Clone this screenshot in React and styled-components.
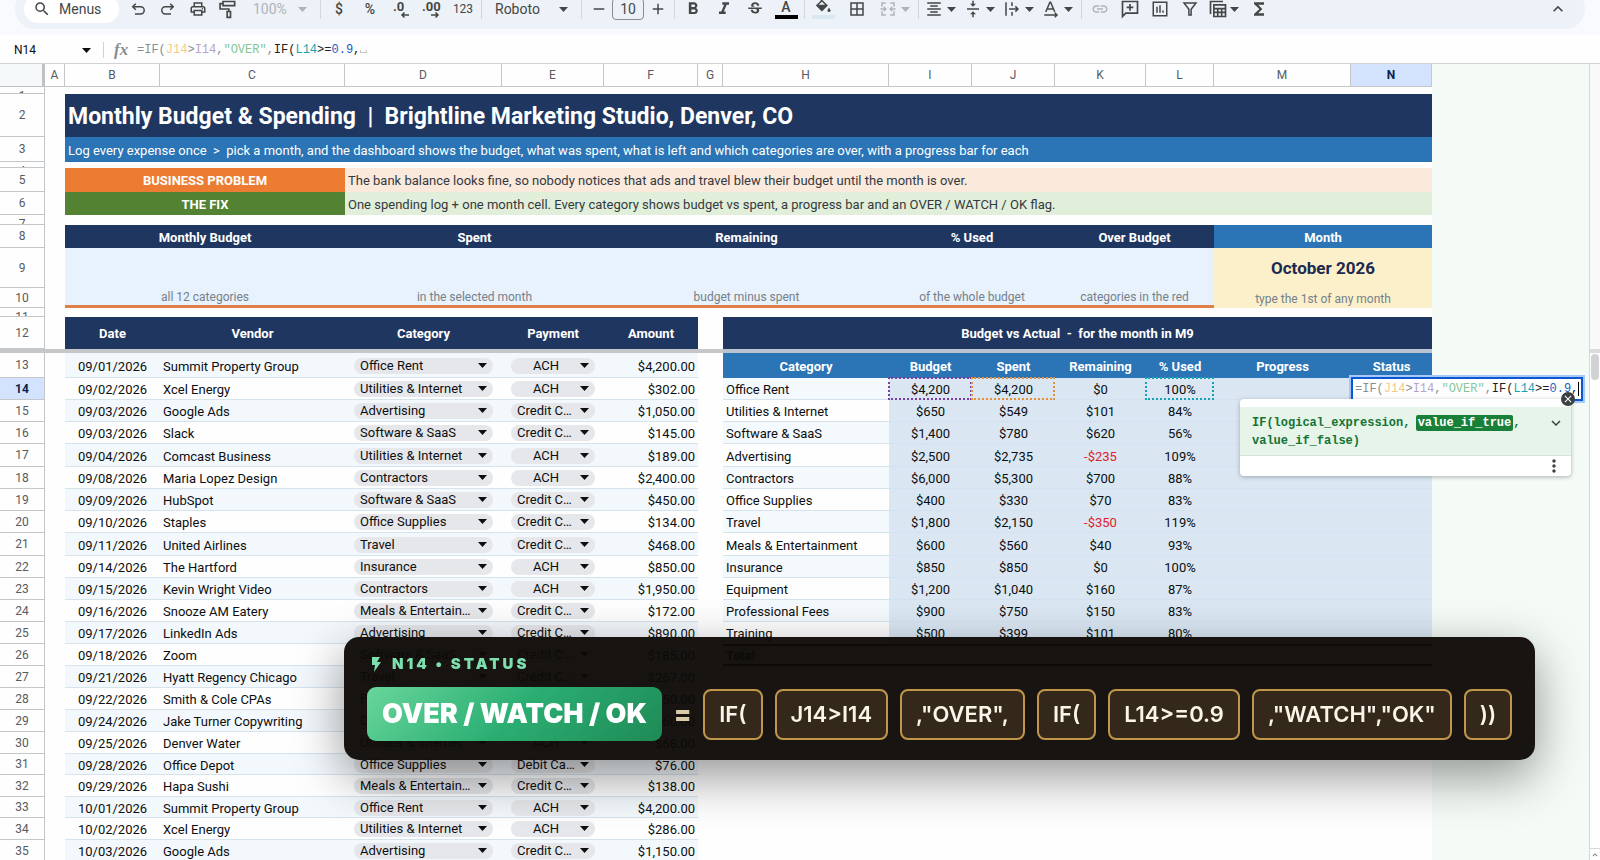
import React, { useState } from 'react';
import styled, { createGlobalStyle, css } from 'styled-components';
import {
  MdAdd,
  MdBorderAll,
  MdClose,
  MdFormatAlignCenter,
  MdFormatBold,
  MdFormatItalic,
  MdFunctions,
  MdKeyboardArrowDown,
  MdKeyboardArrowUp,
  MdLink,
  MdMoreVert,
  MdOutlinePrint,
  MdRemove,
  MdSearch,
  MdStrikethroughS,
  MdVerticalAlignCenter,
} from 'react-icons/md';

const COLUMNS = [
  ['A', 20], ['B', 95], ['C', 185], ['D', 157], ['E', 102], ['F', 94], ['G', 25],
  ['H', 166], ['I', 83], ['J', 83], ['K', 91], ['L', 68], ['M', 137], ['N', 81],
];

const CATEGORIES = [
  'Office Rent', 'Utilities & Internet', 'Software & SaaS', 'Advertising', 'Contractors',
  'Office Supplies', 'Travel', 'Meals & Entertainment', 'Insurance', 'Equipment',
  'Professional Fees', 'Training',
];

const PAYMENTS = ['ACH', 'Credit Card', 'Debit Card'];

// row height, date, vendor, category, payment, amount
const EXPENSES = [
  [25, '09/01/2026', 'Summit Property Group', 'Office Rent', 'ACH', '$4,200.00'],
  [22, '09/02/2026', 'Xcel Energy', 'Utilities & Internet', 'ACH', '$302.00'],
  [22, '09/03/2026', 'Google Ads', 'Advertising', 'Credit Card', '$1,050.00'],
  [22, '09/03/2026', 'Slack', 'Software & SaaS', 'Credit Card', '$145.00'],
  [23, '09/04/2026', 'Comcast Business', 'Utilities & Internet', 'ACH', '$189.00'],
  [22, '09/08/2026', 'Maria Lopez Design', 'Contractors', 'ACH', '$2,400.00'],
  [22, '09/09/2026', 'HubSpot', 'Software & SaaS', 'Credit Card', '$450.00'],
  [22, '09/10/2026', 'Staples', 'Office Supplies', 'Credit Card', '$134.00'],
  [23, '09/11/2026', 'United Airlines', 'Travel', 'Credit Card', '$468.00'],
  [22, '09/14/2026', 'The Hartford', 'Insurance', 'ACH', '$850.00'],
  [22, '09/15/2026', 'Kevin Wright Video', 'Contractors', 'ACH', '$1,950.00'],
  [22, '09/16/2026', 'Snooze AM Eatery', 'Meals & Entertainment', 'Credit Card', '$172.00'],
  [22, '09/17/2026', 'LinkedIn Ads', 'Advertising', 'Credit Card', '$890.00'],
  [22, '09/18/2026', 'Zoom', 'Software & SaaS', 'Credit Card', '$185.00'],
  [22, '09/21/2026', 'Hyatt Regency Chicago', 'Travel', 'Credit Card', '$267.00'],
  [22, '09/22/2026', 'Smith & Cole CPAs', 'Professional Fees', 'ACH', '$750.00'],
  [22, '09/24/2026', 'Jake Turner Copywriting', 'Contractors', 'ACH', '$960.00'],
  [22, '09/25/2026', 'Denver Water', 'Utilities & Internet', 'ACH', '$68.00'],
  [21, '09/28/2026', 'Office Depot', 'Office Supplies', 'Debit Card', '$76.00'],
  [22, '09/29/2026', 'Hapa Sushi', 'Meals & Entertainment', 'Credit Card', '$138.00'],
  [21, '10/01/2026', 'Summit Property Group', 'Office Rent', 'ACH', '$4,200.00'],
  [22, '10/02/2026', 'Xcel Energy', 'Utilities & Internet', 'ACH', '$286.00'],
  [22, '10/03/2026', 'Google Ads', 'Advertising', 'Credit Card', '$1,150.00'],
];

const BUDGET = [
  ['Office Rent', '$4,200', '$4,200', '$0', '100%'],
  ['Utilities & Internet', '$650', '$549', '$101', '84%'],
  ['Software & SaaS', '$1,400', '$780', '$620', '56%'],
  ['Advertising', '$2,500', '$2,735', '-$235', '109%'],
  ['Contractors', '$6,000', '$5,300', '$700', '88%'],
  ['Office Supplies', '$400', '$330', '$70', '83%'],
  ['Travel', '$1,800', '$2,150', '-$350', '119%'],
  ['Meals & Entertainment', '$600', '$560', '$40', '93%'],
  ['Insurance', '$850', '$850', '$0', '100%'],
  ['Equipment', '$1,200', '$1,040', '$160', '87%'],
  ['Professional Fees', '$900', '$750', '$150', '83%'],
  ['Training', '$500', '$399', '$101', '80%'],
];

const KPIS = [
  ['Monthly Budget', 'all 12 categories', 2],
  ['Spent', 'in the selected month', 2],
  ['Remaining', 'budget minus spent', 3],
  ['% Used', 'of the whole budget', 2],
  ['Over Budget', 'categories in the red', 2],
];

const TOKENS = ['IF(', 'J14>I14', ',"OVER",', 'IF(', 'L14>=0.9', ',"WATCH","OK"', '))'];

const Glyph = ({ children, size = 18 }) => (
  <svg width={size} height={size} viewBox="0 0 24 24" fill="none" stroke="currentColor" strokeWidth="2" aria-hidden="true">
    {children}
  </svg>
);

const UndoIcon = () => (
  <Glyph><path d="M9 5 5 9l4 4M5 9h10.500a4.800 4.800 0 0 1 0 9.600H8" /></Glyph>
);

const RedoIcon = () => (
  <Glyph><path d="m15 5 4 4-4 4M19 9H8.500a4.800 4.800 0 0 0 0 9.600H16" /></Glyph>
);

const RollerIcon = () => (
  <Glyph size={20}><path d="M6 3h14v5H6zM6 5.500H2.500V12h10.500v3M11 15h4v7h-4z" /></Glyph>
);

const DecimalIcon = ({ more }) => (
  <svg width="20" height="20" viewBox="0 0 20 20" aria-hidden="true">
    <text x={more ? 0 : 2} y="12" fontFamily="Roboto, sans-serif" fontSize="13" fontWeight="700" fill="currentColor">
      {more ? '.00' : '.0'}
    </text>
    <path
      d={more ? 'M9 16h7M13.500 13.500 16 16l-2.500 2.500' : 'M18 16h-7M13.500 13.500 11 16l2.500 2.500'}
      fill="none"
      stroke="currentColor"
      strokeWidth="1.500"
    />
  </svg>
);

const FillIcon = () => (
  <Glyph>
    <path d="m8 1 9 9-6.500 6.500L4 10l6-6" />
    <path d="M5 10h11l-5.500 6z" fill="currentColor" />
    <path d="M20 13s-2 2.200-2 3.500a2 2 0 0 0 4 0c0-1.300-2-3.500-2-3.500z" fill="currentColor" stroke="none" />
  </Glyph>
);

const MergeIcon = () => (
  <Glyph><path d="M9 4H4v5M15 4h5v5M9 20H4v-5M15 20h5v-5M2 12h7M6.500 9.500 9 12l-2.500 2.500M22 12h-7M17.500 9.500 15 12l2.500 2.500" /></Glyph>
);

const OverflowIcon = () => (
  <Glyph><path d="M4 3v18M12 3v5M12 16v5M8 12h12M16.500 8.500 20 12l-3.500 3.500" /></Glyph>
);

const RotateIcon = () => (
  <Glyph><path d="M5 16 10.500 3h1L17 16M7 12h8M3 20h17M17 17l3 3-3 3" /></Glyph>
);

const CommentIcon = () => (
  <Glyph size={20}><path d="M3 21V3h18v14H7zM12 6v8M8 10h8" /></Glyph>
);

const ChartIcon = () => (
  <Glyph><path d="M3 3h18v18H3zM8 9v8M12 7v10M16 14v3" /></Glyph>
);

const FilterIcon = () => (
  <Glyph><path d="M4 4h16l-6.500 8.500V20h-3v-7.500z" /></Glyph>
);

const TableViewIcon = () => (
  <Glyph size={20}><path d="M18 3H3v15M7 7h14v14H7zM7 11.500h14M7 16h14M11.700 11.500V21M16.400 11.500V21" /></Glyph>
);

const BoltIcon = () => (
  <svg width="18" height="18" viewBox="0 0 18 18" aria-hidden="true">
    <path d="M5 2h8l-3 5h4L7 17l1-7H5z" fill="currentColor" />
  </svg>
);

const Caret = () => (
  <svg width="9" height="5" viewBox="0 0 9 5" aria-hidden="true">
    <path d="M0 0h9L4.500 5z" fill="currentColor" />
  </svg>
);

const Formula = () => (
  <>
    <Tok $c="#8a8d91">=IF(</Tok>
    <Tok $c="#f3c98b">J14</Tok>
    <Tok $c="#8a8d91">&gt;</Tok>
    <Tok $c="#b9a3c9">I14</Tok>
    <Tok $c="#8a8d91">,</Tok>
    <Tok $c="#86c796">"OVER"</Tok>
    <Tok $c="#8a8d91">,</Tok>
    <Tok $c="#202124">IF(</Tok>
    <Tok $c="#12a4b4">L14</Tok>
    <Tok $c="#202124">&gt;=</Tok>
    <Tok $c="#1a5fc4">0.9</Tok>
    <Tok $c="#202124">,</Tok>
  </>
);

const Chip = ({ label, value, options, centered }) => {
  const [current, setCurrent] = useState(value);

  return (
    <ChipBox>
      <ChipSelect
        aria-label={label}
        value={current}
        $centered={centered}
        onChange={(e) => setCurrent(e.target.value)}
      >
        {options.map((option) => (
          <option key={option}>{option}</option>
        ))}
      </ChipSelect>
      <Caret />
    </ChipBox>
  );
};

const Toolbar = () => (
  <ToolbarBar>
    <MenusButton><MdSearch size={18} />Menus</MenusButton>
    <Group>
      <ToolButton aria-label="Undo"><UndoIcon /></ToolButton>
      <ToolButton aria-label="Redo"><RedoIcon /></ToolButton>
      <ToolButton aria-label="Print"><MdOutlinePrint size={18} /></ToolButton>
      <ToolButton aria-label="Paint format"><RollerIcon /></ToolButton>
    </Group>
    <ToolSelect $width={74} $muted>
      <select aria-label="Zoom" defaultValue="100%">
        <option>100%</option>
      </select>
      <Caret />
    </ToolSelect>
    <Divider />
    <Group $gap={1}>
      <ToolButton aria-label="Currency">$</ToolButton>
      <ToolButton aria-label="Percent">%</ToolButton>
      <ToolButton aria-label="Decrease decimals"><DecimalIcon /></ToolButton>
      <ToolButton aria-label="Increase decimals"><DecimalIcon more /></ToolButton>
      <ToolButton $small>123</ToolButton>
    </Group>
    <Divider />
    <ToolSelect $width={93}>
      <select aria-label="Font" defaultValue="Roboto">
        <option>Roboto</option>
      </select>
      <Caret />
    </ToolSelect>
    <Divider />
    <Group>
      <ToolButton $narrow aria-label="Decrease font size"><MdRemove size={18} /></ToolButton>
      <SizeInput aria-label="Font size" defaultValue="10" />
      <ToolButton $narrow aria-label="Increase font size"><MdAdd size={18} /></ToolButton>
    </Group>
    <Divider />
    <Group $gap={1}>
      <ToolButton aria-label="Bold"><MdFormatBold size={20} /></ToolButton>
      <ToolButton aria-label="Italic"><MdFormatItalic size={20} /></ToolButton>
      <ToolButton aria-label="Strikethrough"><MdStrikethroughS size={18} /></ToolButton>
      <ToolButton aria-label="Text color"><Swatch $color="#000">A</Swatch></ToolButton>
    </Group>
    <Divider />
    <Group $gap={4}>
      <ToolButton aria-label="Fill color"><Swatch $color="#dae8f3"><FillIcon /></Swatch></ToolButton>
      <ToolButton aria-label="Borders"><MdBorderAll size={18} /></ToolButton>
      <SplitButton $muted aria-label="Merge cells"><MergeIcon /><Caret /></SplitButton>
    </Group>
    <Divider />
    <Group>
      <SplitButton aria-label="Horizontal align"><MdFormatAlignCenter size={18} /><Caret /></SplitButton>
      <SplitButton aria-label="Vertical align"><MdVerticalAlignCenter size={18} /><Caret /></SplitButton>
      <SplitButton aria-label="Text wrapping"><OverflowIcon /><Caret /></SplitButton>
      <SplitButton aria-label="Text rotation"><RotateIcon /><Caret /></SplitButton>
    </Group>
    <Divider />
    <Group>
      <ToolButton $muted aria-label="Insert link"><MdLink size={18} /></ToolButton>
      <ToolButton aria-label="Insert comment"><CommentIcon /></ToolButton>
      <ToolButton aria-label="Insert chart"><ChartIcon /></ToolButton>
      <ToolButton aria-label="Create a filter"><FilterIcon /></ToolButton>
      <SplitButton aria-label="Table views"><TableViewIcon /><Caret /></SplitButton>
      <ToolButton aria-label="Functions"><MdFunctions size={20} /></ToolButton>
    </Group>
    <CollapseButton aria-label="Hide the menus"><MdKeyboardArrowUp size={20} /></CollapseButton>
  </ToolbarBar>
);

const FormulaHint = () => (
  <HintCard>
    <HintSignature>
      <code>
        IF(logical_expression, <mark>value_if_true</mark>,
        <br />
        value_if_false)
      </code>
      <HintButton aria-label="Expand"><MdKeyboardArrowDown size={18} /></HintButton>
    </HintSignature>
    <HintFooter>
      <HintButton aria-label="More options"><MdMoreVert size={20} /></HintButton>
    </HintFooter>
  </HintCard>
);

const CellEditor = () => (
  <Editor role="textbox" aria-label="Cell N14">
    <Formula />
    <TextCursor />
    <CloseHint aria-label="Close help"><MdClose size={12} /></CloseHint>
    <FormulaHint />
  </Editor>
);

const SheetRow = ({ n, height, selected, children }) => (
  <tr>
    <RowHead scope="row" $selected={selected}>
      <RowLabel $height={height}>{n}</RowLabel>
    </RowHead>
    <td />
    {children}
  </tr>
);

const BudgetCells = ({ index }) => {
  if (index === 0) {
    return (
      <>
        {['Category', 'Budget', 'Spent', 'Remaining', '% Used', 'Progress', 'Status'].map((name) => (
          <Cell key={name} as="th" $bg="#2b74b5" $color="#fff" $bold>{name}</Cell>
        ))}
      </>
    );
  }
  if (index === BUDGET.length + 1) {
    return (
      <>
        <TotalCell $align="left" $bold>Total</TotalCell>
        <TotalCell colSpan={6} />
      </>
    );
  }
  const row = BUDGET[index - 1];
  if (!row) return <td colSpan={7} />;

  const [name, budget, spent, remaining, used] = row;
  const first = index === 1;
  return (
    <>
      <Cell $align="left" $bg={index % 2 ? '#f4f9fd' : '#fefefe'} $line="#d5e3ed">{name}</Cell>
      <Cell $bg="#dae7f3" $line="#d4e2ef" $ref={first && '#7b3fa0'}>{budget}</Cell>
      <Cell $bg="#dae7f3" $line="#d4e2ef" $ref={first && '#e69138'}>{spent}</Cell>
      <Cell $bg="#dae7f3" $line="#d4e2ef" $color={remaining.startsWith('-') ? '#e0202b' : undefined}>{remaining}</Cell>
      <Cell $bg="#dae7f3" $line="#d4e2ef" $ref={first && '#12a4b4'}>{used}</Cell>
      <Cell $bg="#dae7f3" $line="#d4e2ef" />
      <Cell $bg="#dae7f3" $line="#d4e2ef">{first && <CellEditor />}</Cell>
    </>
  );
};

const Sheet = () => (
  <Table>
    <colgroup>
      <col style={{ width: 45 }} />
      {COLUMNS.map(([name, width]) => (
        <col key={name} style={{ width }} />
      ))}
    </colgroup>
    <thead>
      <tr>
        <Corner />
        {COLUMNS.map(([name]) => (
          <ColHead key={name} scope="col" $selected={name === 'N'}>{name}</ColHead>
        ))}
      </tr>
    </thead>
    <tbody>
      <SheetRow n={1} height={7} />
      <SheetRow n={2} height={43}>
        <Cell colSpan={13} $align="left" $bg="#1f3661" $color="#fff" $bold $size={23}>
          {'Monthly Budget & Spending  |  Brightline Marketing Studio, Denver, CO'}
        </Cell>
      </SheetRow>
      <SheetRow n={3} height={25}>
        <Cell colSpan={13} $align="left" $bg="#2b74b5" $color="#fff">
          {'Log every expense once  >  pick a month, and the dashboard shows the budget, what was spent, what is left and which categories are over, with a progress bar for each'}
        </Cell>
      </SheetRow>
      <SheetRow n={4} height={6} />
      <SheetRow n={5} height={24}>
        <Cell colSpan={2} $bg="#eb7c31" $color="#fff" $bold>BUSINESS PROBLEM</Cell>
        <Cell colSpan={11} $align="left" $bg="#fbe9dc" $color="#333a40">
          The bank balance looks fine, so nobody notices that ads and travel blew their budget until the month is over.
        </Cell>
      </SheetRow>
      <SheetRow n={6} height={23}>
        <Cell colSpan={2} $bg="#538233" $color="#fff" $bold>THE FIX</Cell>
        <Cell colSpan={11} $align="left" $bg="#e1eed9" $color="#333a40">
          One spending log + one month cell. Every category shows budget vs spent, a progress bar and an OVER / WATCH / OK flag.
        </Cell>
      </SheetRow>
      <SheetRow n={7} height={10} />
      <SheetRow n={8} height={23}>
        {KPIS.map(([name, , span]) => (
          <Cell key={name} colSpan={span} $bg="#1f3661" $color="#fff" $bold>{name}</Cell>
        ))}
        <Cell colSpan={2} $bg="#2b74b5" $color="#fff" $bold>Month</Cell>
      </SheetRow>
      <SheetRow n={9} height={40}>
        <Cell colSpan={11} $bg="#e8f2fc" />
        <Cell colSpan={2} $bg="#fcf0cb" $color="#1b2a4e" $bold $size={17}>October 2026</Cell>
      </SheetRow>
      <SheetRow n={10} height={20}>
        {KPIS.map(([name, note, span]) => (
          <Cell key={name} colSpan={span} $bg="#e8f2fc" $color="#75808a" $size={12} $accent>{note}</Cell>
        ))}
        <Cell colSpan={2} $bg="#fcf0cb" $color="#75808a" $size={12}>type the 1st of any month</Cell>
      </SheetRow>
      <SheetRow n={11} height={9} />
      <SheetRow n={12} height={32}>
        {['Date', 'Vendor', 'Category', 'Payment', 'Amount'].map((name) => (
          <Cell key={name} as="th" $bg="#1f3661" $color="#fff" $bold>{name}</Cell>
        ))}
        <td />
        <Cell colSpan={7} $bg="#1f3661" $color="#fff" $bold>{'Budget vs Actual  -  for the month in M9'}</Cell>
      </SheetRow>
      <tr>
        <FreezeLine colSpan={8} />
        <FreezeLine colSpan={7} $blue />
      </tr>
      {EXPENSES.map(([height, date, vendor, category, payment, amount], i) => {
        const bg = i % 2 ? '#fefefe' : '#f3f8fc';
        return (
          <SheetRow key={i} n={i + 13} height={height} selected={i === 1}>
            <Cell $bg={bg} $line="#d5e3ed">{date}</Cell>
            <Cell $bg={bg} $line="#d5e3ed" $align="left">{vendor}</Cell>
            <Cell $bg={bg} $line="#d5e3ed" $chip>
              <Chip label={`Category, row ${i + 13}`} value={category} options={CATEGORIES} />
            </Cell>
            <Cell $bg={bg} $line="#d5e3ed" $chip>
              <Chip label={`Payment, row ${i + 13}`} value={payment} options={PAYMENTS} centered />
            </Cell>
            <Cell $bg={bg} $line="#d5e3ed" $align="right">{amount}</Cell>
            <td />
            <BudgetCells index={i} />
          </SheetRow>
        );
      })}
    </tbody>
  </Table>
);

const FormulaCard = () => (
  <Card>
    <CardTitle><BoltIcon />N14 • STATUS</CardTitle>
    <CardRow>
      <ResultPill>OVER / WATCH / OK</ResultPill>
      <EqualSign>=</EqualSign>
      {TOKENS.map((token, i) => (
        <FormulaToken key={i}>{token}</FormulaToken>
      ))}
    </CardRow>
  </Card>
);

const App = () => (
  <Page>
    <GlobalStyle />
    <ToolbarArea>
      <Toolbar />
    </ToolbarArea>
    <FormulaBar>
      <NameBox>
        <input aria-label="Name box" defaultValue="N14" />
        <Caret />
      </NameBox>
      <Fx>fx</Fx>
      <FormulaText role="textbox" aria-label="Formula"><Formula /><SpaceMark /></FormulaText>
    </FormulaBar>
    <SheetArea>
      <Sheet />
      <EmptyArea />
      <ScrollTrack>
        <ScrollTop />
        <ScrollThumb />
        <ScrollUp aria-label="Scroll up"><MdKeyboardArrowUp size={10} /></ScrollUp>
      </ScrollTrack>
    </SheetArea>
    <FormulaCard />
  </Page>
);

const mono = css`
  font-family: "Liberation Mono", monospace;
  font-size: 12px;
`;

const GlobalStyle = createGlobalStyle`
  * {
    box-sizing: border-box;
  }
  body {
    margin: 0;
    overflow: hidden;
    font-family: Roboto, sans-serif;
    font-size: 14px;
    color: #0c0e10;
  }
  button, input, select {
    margin: 0;
    padding: 0;
    border: 0;
    outline: 0;
    background: none;
    font: inherit;
    color: inherit;
  }
  select {
    appearance: none;
  }
  svg {
    flex: none;
  }
`;

const Page = styled.div`
  display: flex;
  flex-direction: column;
  height: 100vh;
  overflow: hidden;
  background: #fefefe;
`;

const ToolbarArea = styled.div`
  flex: none;
  height: 35px;
  padding: 0 15px;
  background: #f8fafd;
`;

const ToolbarBar = styled.div`
  display: flex;
  align-items: center;
  height: 40px;
  margin-top: -11px;
  padding: 0 12px 0 9px;
  border-radius: 20px;
  background: #edf2f8;
  color: #444746;
`;

const MenusButton = styled.button`
  display: flex;
  align-items: center;
  gap: 8px;
  width: 95px;
  height: 28px;
  margin-right: 4px;
  padding-left: 9px;
  border-radius: 14px;
  background: #fff;
`;

const Group = styled.div`
  display: flex;
  align-items: center;
  gap: ${({ $gap }) => $gap || 0}px;
`;

const ToolButton = styled.button`
  display: flex;
  align-items: center;
  justify-content: center;
  width: ${({ $narrow }) => ($narrow ? 27 : 30)}px;
  height: 28px;
  font-size: ${({ $small }) => ($small ? 12 : 14)}px;
  font-weight: ${({ $small }) => ($small ? 400 : 500)};
  color: ${({ $muted }) => ($muted ? '#b0b3b7' : 'inherit')};
`;

const SplitButton = styled.button`
  display: flex;
  align-items: center;
  justify-content: space-between;
  width: 39px;
  height: 28px;
  padding: 0 5px 0 3px;
  color: ${({ $muted }) => ($muted ? '#b0b3b7' : 'inherit')};
`;

const CollapseButton = styled(ToolButton)`
  margin-left: auto;
`;

const ToolSelect = styled.label`
  display: flex;
  align-items: center;
  width: ${({ $width }) => $width}px;
  padding: 0 10px;
  color: ${({ $muted }) => ($muted ? '#b0b3b7' : 'inherit')};
  select {
    flex: 1;
    min-width: 0;
  }
`;

const Divider = styled.span`
  width: 1px;
  height: 20px;
  margin: 0 3px;
  background: #d3d7dc;
`;

const SizeInput = styled.input`
  width: 32px;
  height: 22px;
  border: 1px solid #8a8d91;
  border-radius: 4px;
  text-align: center;
`;

const Swatch = styled.span`
  display: flex;
  align-items: center;
  justify-content: center;
  width: 23px;
  height: 20px;
  border-bottom: 4px solid ${({ $color }) => $color};
`;

const FormulaBar = styled.div`
  display: flex;
  flex: none;
  align-items: center;
  height: 29px;
  padding-top: 2px;
  border-bottom: 1px solid #d0d3d6;
`;

const NameBox = styled.label`
  display: flex;
  align-items: center;
  width: 104px;
  height: 16px;
  padding: 0 12px 0 14px;
  border-right: 1px solid #d0d3d6;
  input {
    flex: 1;
    min-width: 0;
    font-size: 12px;
  }
`;

const Fx = styled.span`
  width: 33px;
  padding-left: 10px;
  font-family: "Liberation Serif", serif;
  font-size: 17px;
  font-style: italic;
  font-weight: 700;
  color: #8a8d91;
`;

const FormulaText = styled.div`
  ${mono}
  flex: 1;
`;

const Tok = styled.span`
  color: ${({ $c }) => $c};
`;

const SpaceMark = styled.span`
  display: inline-block;
  width: 7px;
  height: 3px;
  border: 1px solid #c4c7ca;
  border-top: 0;
`;

const SheetArea = styled.div`
  display: flex;
  flex: 1;
  min-height: 0;
  overflow: hidden;
`;

const Table = styled.table`
  flex: none;
  width: 1432px;
  height: max-content;
  table-layout: fixed;
  border-spacing: 0;
  td, th {
    padding: 0;
  }
`;

const Corner = styled.td`
  height: 23px;
  border-right: 3px solid #bfc2c5;
  border-bottom: 1px solid #bfc2c5;
  background: #f6f9fa;
`;

const ColHead = styled.th`
  height: 23px;
  border-right: 1px solid #c4c7ca;
  border-bottom: 1px solid #c4c7ca;
  background: ${({ $selected }) => ($selected ? '#d3e3fd' : '#fefefe')};
  font-size: 12px;
  font-weight: ${({ $selected }) => ($selected ? 700 : 400)};
  color: ${({ $selected }) => ($selected ? '#0b1f4b' : '#575b5f')};
`;

const RowHead = styled.th`
  border-right: 1px solid #c4c7ca;
  border-bottom: 1px solid #c4c7ca;
  background: ${({ $selected }) => ($selected ? '#d3e3fd' : '#fefefe')};
  font-weight: ${({ $selected }) => ($selected ? 700 : 400)};
  color: ${({ $selected }) => ($selected ? '#0b1f4b' : '#575b5f')};
`;

// squeezed rows keep the number at the top and cut it off
const RowLabel = styled.div`
  display: flex;
  align-items: ${({ $height }) => ($height < 18 ? 'flex-start' : 'center')};
  justify-content: center;
  height: ${({ $height }) => $height - 1}px;
  overflow: hidden;
  font-size: 12px;
  line-height: 18px;
`;

const Cell = styled.td`
  && {
    position: relative;
    padding: ${({ $chip, $line }) => ($chip ? '1px 9px 0' : $line ? '2px 3px 0' : '1px 3px 0')};
  }
  height: 0;
  background: ${({ $bg }) => $bg};
  border-bottom: ${({ $line, $accent }) => ($accent ? '3px solid #e07f4a' : $line ? `1px solid ${$line}` : '0')};
  color: ${({ $color }) => $color || 'inherit'};
  font-size: ${({ $size }) => $size || 13}px;
  font-weight: ${({ $bold }) => ($bold ? 700 : 400)};
  line-height: 1;
  text-align: ${({ $align }) => $align || 'center'};
  white-space: pre;
  ${({ $ref }) => $ref && css`
    &::after {
      content: "";
      position: absolute;
      inset: -1px 0 -1px -1px;
      border: 2px dotted ${$ref};
    }
  `}
`;

const TotalCell = styled(Cell)`
  border-top: 2px solid #111;
  border-bottom: 2px solid #111;
  background: #dae7f3;
`;

const FreezeLine = styled.td`
  height: 4px;
  background: ${({ $blue }) => ($blue ? '#b9c3d2' : '#c5c7c9')};
`;

const ChipBox = styled.label`
  position: relative;
  display: block;
  height: 16px;
  svg {
    position: absolute;
    top: 5px;
    right: 6px;
    pointer-events: none;
  }
`;

const ChipSelect = styled.select`
  display: block;
  width: 100%;
  height: 16px;
  padding: 0 20px 0 6px;
  border-radius: 8px;
  background: #e6e7ea;
  line-height: 16px;
  overflow: hidden;
  text-align-last: ${({ $centered }) => ($centered ? 'center' : 'left')};
  text-overflow: ellipsis;
  white-space: nowrap;
`;

const Editor = styled.div`
  ${mono}
  position: absolute;
  z-index: 2;
  top: -1px;
  left: 0;
  display: flex;
  align-items: center;
  width: 232px;
  height: 24px;
  padding-left: 2px;
  border: 2px solid #0b57d0;
  outline: 2px solid #a8c7fa;
  background: #fff;
`;

const TextCursor = styled.span`
  width: 1px;
  height: 14px;
  background: #000;
`;

const CloseHint = styled.button`
  position: absolute;
  z-index: 2;
  right: 6px;
  bottom: -7px;
  display: flex;
  align-items: center;
  justify-content: center;
  width: 14px;
  height: 14px;
  border-radius: 50%;
  background: #3c4043;
  color: #fff;
`;

const HintCard = styled.div`
  position: absolute;
  top: 20px;
  right: 10px;
  width: 331px;
  padding-top: 8px;
  border-radius: 4px;
  background: #fff;
  box-shadow: 0 1px 4px rgba(60, 64, 67, 0.4);
`;

const HintSignature = styled.div`
  display: flex;
  align-items: flex-start;
  justify-content: space-between;
  height: 49px;
  padding: 7px 6px 0 12px;
  background: #e6f4ea;
  border-bottom: 1px solid #d5e3da;
  color: #137333;
  code {
    ${mono}
    font-weight: 700;
    line-height: 18px;
    text-align: left;
  }
  mark {
    padding: 1px 2px;
    margin-left: -2px;
    border-radius: 2px;
    background: #188038;
    color: #fff;
  }
`;

const HintFooter = styled.div`
  display: flex;
  justify-content: flex-end;
  height: 20px;
  padding-right: 7px;
`;

const HintButton = styled.button`
  display: flex;
  align-items: center;
  color: #3c4043;
`;

const EmptyArea = styled.div`
  flex: 1;
  background: #f4faf6;
`;

const ScrollTrack = styled.div`
  display: flex;
  flex: none;
  flex-direction: column;
  width: 11px;
  border-left: 1px solid #d5d8da;
`;

const ScrollTop = styled.div`
  height: 289px;
  border-bottom: 4px solid #d9dbdd;
  background: #f8faf9;
`;

const ScrollThumb = styled.div`
  height: 26px;
  margin: 1px;
  border-radius: 5px;
  background: #d0d2d4;
`;

const ScrollUp = styled.button`
  height: 12px;
  margin-top: auto;
  border-top: 1px solid #d5d8da;
  color: #75787b;
  line-height: 0;
`;

const Card = styled.section`
  position: fixed;
  z-index: 5;
  left: 344px;
  bottom: 100px;
  padding: 17px 23px 19px;
  border-radius: 15px;
  background: rgba(14, 10, 7, 0.96);
  box-shadow: 0 16px 50px rgba(0, 0, 0, 0.42);
  font-family: Inter, sans-serif;
`;

const CardTitle = styled.h2`
  display: flex;
  align-items: center;
  gap: 7px;
  margin: 0 0 13px;
  font-size: 15px;
  font-weight: 900;
  line-height: 20px;
  letter-spacing: 3px;
  color: #7ce0ae;
`;

const CardRow = styled.div`
  display: flex;
  align-items: center;
  gap: 12px;
`;

const ResultPill = styled.span`
  padding: 0 15px;
  border-radius: 9px;
  background: linear-gradient(135deg, #68d69c 0%, #2bae72 50%, #1f8a56 100%);
  color: #fff;
  font-size: 27px;
  font-weight: 900;
  line-height: 54px;
  white-space: nowrap;
`;

const EqualSign = styled.span`
  color: #d9caa8;
  font-size: 25px;
  font-weight: 900;
`;

const FormulaToken = styled.span`
  padding: 0 14px;
  border: 2px solid #c2964a;
  border-radius: 8px;
  background: #33281a;
  color: #fbf5e9;
  font-size: 22px;
  font-weight: 600;
  line-height: 47px;
  white-space: nowrap;
`;

export default App;
